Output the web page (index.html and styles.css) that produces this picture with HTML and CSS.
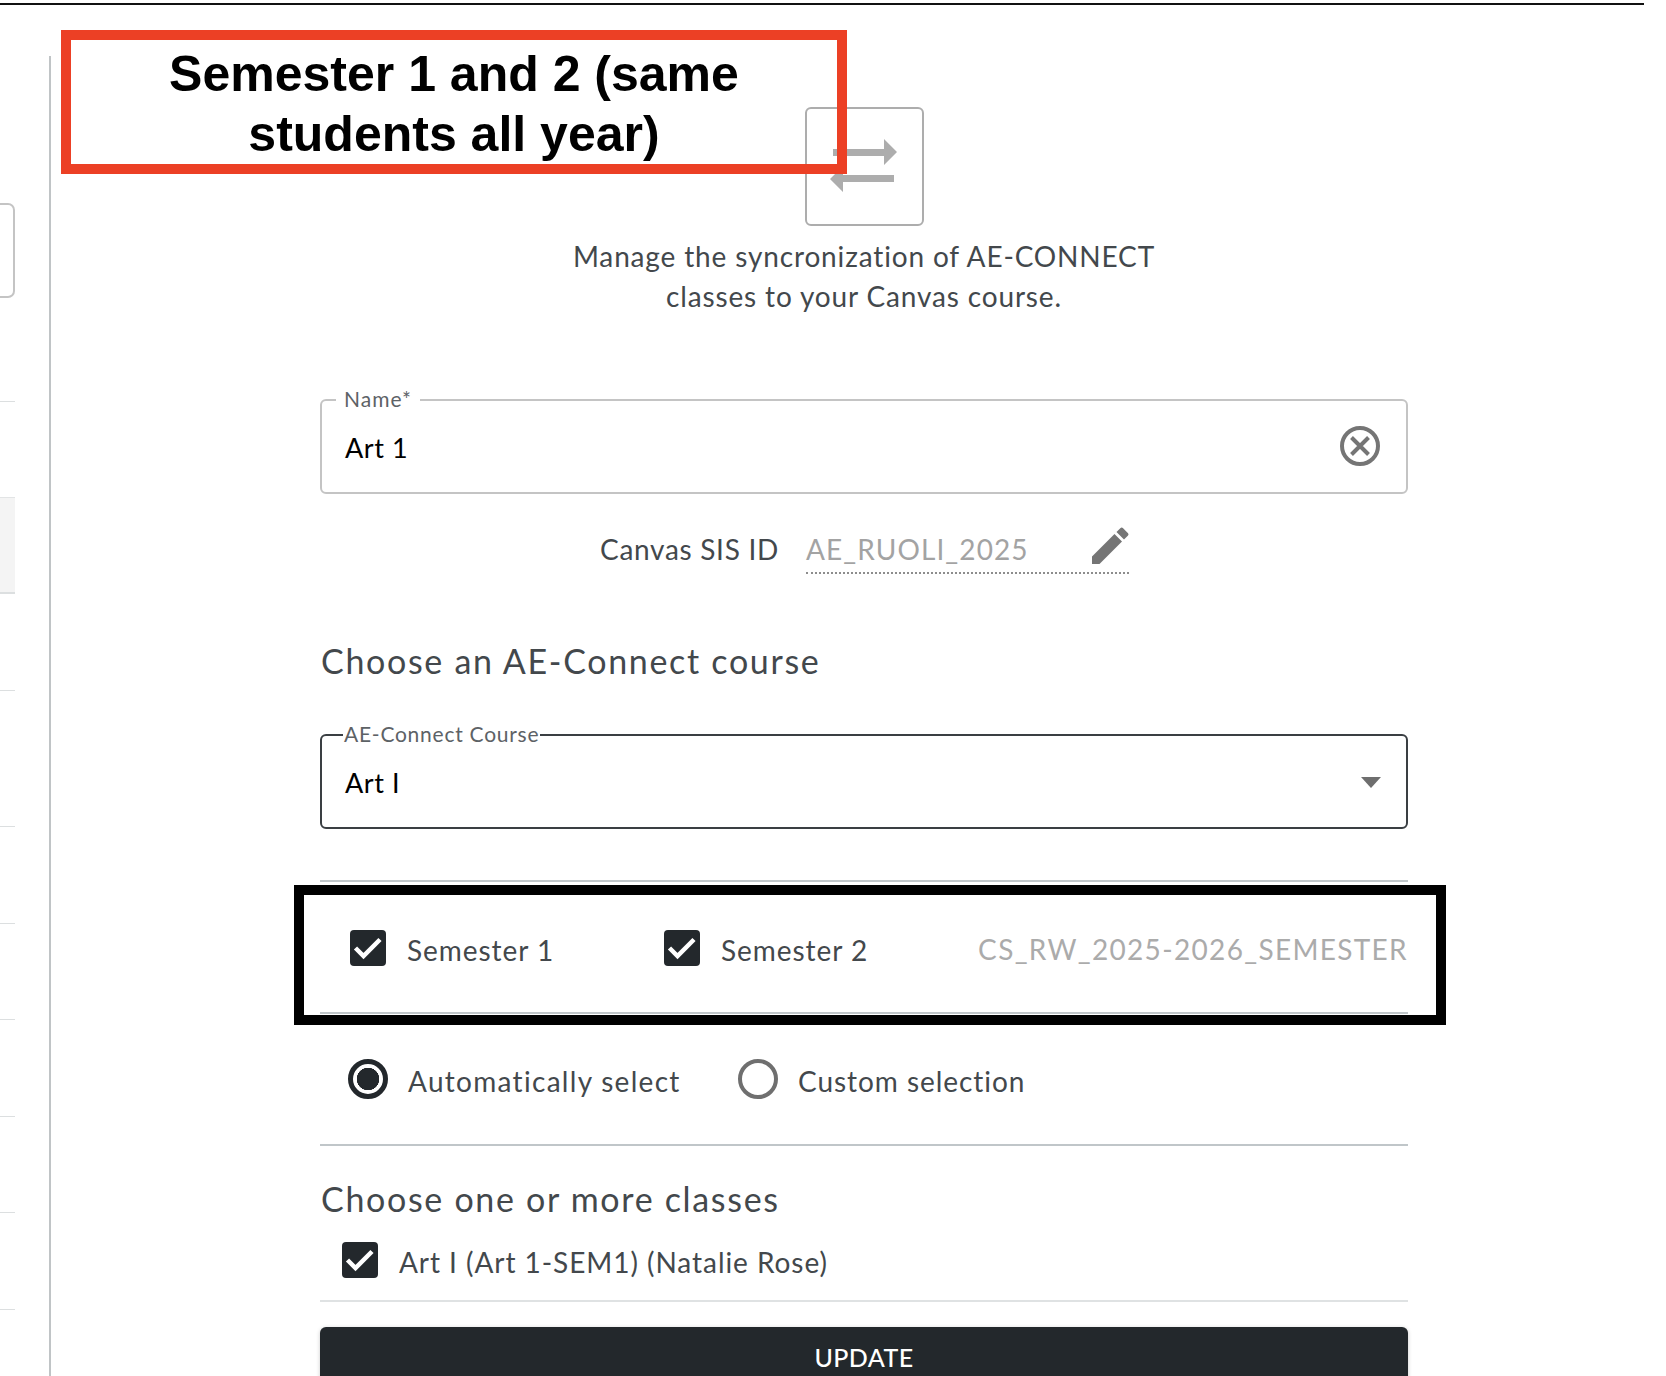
FILE: index.html
```html
<!DOCTYPE html>
<html lang="en">
<head>
<meta charset="utf-8">
<title>Manage syncronization</title>
<link rel="stylesheet" href="styles.css">
</head>
<body>
<div class="page">
  <div class="top-rule"></div>
  <div class="layout">
    <aside class="side">
      <div class="side-box"></div>
      <div class="side-row r1"></div>
      <div class="side-active"></div>
      <div class="side-row r2"></div>
      <div class="side-row r3"></div>
      <div class="side-row r4"></div>
      <div class="side-row r5"></div>
      <div class="side-row r4"></div>
      <div class="side-row r5"></div>
      <div class="side-row r4"></div>
    </aside>
    <div class="rail"></div>
    <main class="form">
      <div class="logo-box">
        <svg class="logo" viewBox="0 0 119 119" aria-hidden="true"><path d="M28 42h51V32l13 13-13 13V49H28z"/><path d="M89 68H38V59L25 72l13 13V75h51z"/></svg>
      </div>
      <p class="intro">Manage the syncronization of AE-CONNECT<br>classes to your Canvas course.</p>

      <div class="field name-field">
        <span class="field-label">Name*</span>
        <span class="field-value">Art 1</span>
        <svg class="clear" viewBox="0 0 40 40" aria-hidden="true"><circle cx="20" cy="20" r="18" /><path d="M11.500 11.500l17 17M28.500 11.500l-17 17"/></svg>
      </div>

      <div class="sis">
        <span class="sis-label">Canvas SIS ID</span>
        <div class="sis-input">
          <span>AE_RUOLI_2025</span>
          <svg class="pencil" viewBox="0 0 37 37" aria-hidden="true"><path d="M0 29.500 22.500 7l7.500 7.500L7.500 37H0zM24.500 5l3.800-3.800a2 2 0 0 1 2.800 0l4.700 4.700a2 2 0 0 1 0 2.800L32 12.500z"/></svg>
        </div>
      </div>

      <h2 class="heading course-heading">Choose an AE-Connect course</h2>

      <div class="field select-field">
        <span class="field-label">AE-Connect Course</span>
        <span class="field-value">Art I</span>
        <span class="caret"></span>
      </div>

      <hr class="divider d1">
      <div class="terms">
        <label class="opt term-1"><svg class="check" viewBox="0 0 36 36" aria-hidden="true"><rect width="36" height="36" rx="4"/><path d="M5.500 18l8 8L30 9.500"/></svg><span class="opt-text">Semester 1</span></label>
        <label class="opt term-2"><svg class="check" viewBox="0 0 36 36" aria-hidden="true"><rect width="36" height="36" rx="4"/><path d="M5.500 18l8 8L30 9.500"/></svg><span class="opt-text">Semester 2</span></label>
        <span class="term-code">CS_RW_2025-2026_SEMESTER</span>
      </div>
      <hr class="divider d2">

      <div class="radios">
        <label class="opt radio-auto"><span class="radio on"></span><span class="opt-text">Automatically select</span></label>
        <label class="opt radio-custom"><span class="radio"></span><span class="opt-text">Custom selection</span></label>
      </div>
      <hr class="divider d3">

      <h2 class="heading classes-heading">Choose one or more classes</h2>
      <label class="opt class-opt"><svg class="check" viewBox="0 0 36 36" aria-hidden="true"><rect width="36" height="36" rx="4"/><path d="M5.500 18l8 8L30 9.500"/></svg><span class="opt-text">Art I (Art 1-SEM1) (Natalie Rose)</span></label>
      <hr class="divider d4">
      <button class="update" type="button">UPDATE</button>
    </main>
  </div>

  <div class="note-red">Semester 1 and 2 (same<br>students all year)</div>
  <div class="note-black"></div>
</div>
</body>
</html>
```

FILE: styles.css
```css
* { box-sizing: border-box; }
html, body { margin: 0; padding: 0; background: #fff; }
.page {
  position: relative;
  width: 1666px;
  height: 1376px;
  overflow: hidden;
  font-family: Lato, "Noto Sans", sans-serif;
  color: #43484c;
  background: #fff;
}
.top-rule { width: 1644px; height: 2px; margin-top: 3px; background: #111; }
.layout { display: flex; align-items: flex-start; height: 1371px; }

.side { width: 15px; flex: none; padding-top: 198px; }
.side-box { height: 95px; border: 2px solid #c4c4c4; border-left: 0; border-radius: 0 7px 7px 0; }
.side-row { border-bottom: 1px solid #dcdfe0; }
.r1 { height: 104px; }
.side-active { height: 97px; margin-top: 95px; background: #f4f4f4; border-top: 1px solid #e2e4e5; border-bottom: 2px solid #dcdfe0; }
.r2 { height: 97px; }
.r3 { height: 136px; }
.r4 { height: 97px; }
.r5 { height: 96px; }

.rail { width: 2px; flex: none; height: 1320px; margin: 51px 0 0 34px; background: #c0c4c6; }

.form { width: 1088px; flex: none; margin-left: 269px; display: flex; flex-direction: column; }

.logo-box {
  width: 119px;
  height: 119px;
  margin: 102px auto 0;
  border: 2px solid #adadad;
  border-radius: 6px;
}
.logo { display: block; width: 119px; height: 119px; margin: -2px; fill: #adadad; }
.intro { margin: 10px 0 0; font-size: 28px; line-height: 40px; letter-spacing: 0.85px; text-align: center; }

.field {
  position: relative;
  height: 95px;
  border: 2px solid #c4c4c4;
  border-radius: 6px;
  display: flex;
  align-items: center;
}
.name-field { margin-top: 83px; }
.select-field { margin-top: 53px; border-color: #3a3f43; }
.field-label {
  position: absolute;
  left: 14px;
  top: -14px;
  padding: 0 8px;
  background: #fff;
  font-size: 21px;
  line-height: 24px;
  letter-spacing: 0.75px;
  color: #5d6266;
}
.name-field .field-label { letter-spacing: 1px; }
.select-field .field-label { padding: 0 1px; left: 21px; }
.field-value { margin: 1px 0 0 23px; font-size: 27px; color: #000; letter-spacing: 0.6px; }
.clear { position: absolute; right: 26px; top: 25px; width: 40px; height: 40px; fill: none; stroke: #757575; stroke-width: 4; }
.caret {
  position: absolute;
  right: 25px;
  top: 41px;
  border-style: solid;
  border-width: 11px 10px 0;
  border-color: #6e6e6e transparent transparent;
}

.sis { display: flex; align-items: flex-start; margin: 33px 0 0 280px; }
.sis-label { font-size: 28px; line-height: 44px; letter-spacing: 0.7px; margin-right: 27px; }
.sis-input {
  width: 323px;
  height: 47px;
  display: flex;
  justify-content: space-between;
  border-bottom: 2px dotted #8d8d8d;
  color: #a3a3a3;
  font-size: 28px;
  line-height: 44px;
  letter-spacing: 1.1px;
}
.pencil { width: 37px; height: 37px; fill: #757575; flex: none; }

.heading { margin: 0 0 0 1px; font-size: 34px; font-weight: 400; line-height: 40px; letter-spacing: 1.68px; }
.course-heading { margin-top: 67px; }

.divider { width: 100%; height: 2px; margin: 0; border: 0; background: #c0c6c9; }
.d1 { margin-top: 51px; }
.d2 { margin-top: 46px; }
.d3 { margin-top: 45px; }
.d4 { margin-top: 22px; background: #dfe2e3; }

.opt { display: flex; align-items: center; font-size: 28px; line-height: 36px; letter-spacing: 0.95px; }
.opt-text { padding-top: 3px; }
.check { width: 36px; height: 36px; flex: none; margin-right: 21px; }
.check rect { fill: #23282c; }
.check path { fill: none; stroke: #fff; stroke-width: 4.500; }

.terms { display: flex; align-items: center; height: 36px; margin-top: 48px; padding-left: 30px; }
.term-1 { width: 314px; }
.term-code { margin-left: auto; padding-top: 2px; color: #ababab; letter-spacing: 1.33px; font-size: 28px; }

.radios { display: flex; align-items: center; height: 40px; margin-top: 45px; padding-left: 28px; }
.radio-auto { width: 390px; letter-spacing: 1.3px; }
.radio { width: 40px; height: 40px; flex: none; margin-right: 20px; border: 4px solid #6f6f6f; border-radius: 50%; }
.radio.on { border: 5px solid #23282c; background: radial-gradient(circle, #23282c 0 11px, #fff 11.500px); }

.classes-heading { margin-top: 33px; }
.class-opt { height: 36px; margin: 23px 0 0 22px; }

.update {
  height: 80px;
  margin-top: 25px;
  border: 0;
  border-radius: 6px;
  background: #23282c;
  box-shadow: 0 1px 4px rgba(0, 0, 0, 0.2);
  color: #fff;
  font-family: Lato, "Noto Sans", sans-serif;
  font-size: 25px;
  font-weight: 500;
  letter-spacing: 0.4px;
  padding: 0 0 20px;
}

.note-red {
  position: absolute;
  left: 61px;
  top: 30px;
  width: 786px;
  height: 144px;
  padding-top: 4px;
  border: 10px solid #ec4025;
  font-family: "Liberation Sans", Arial, sans-serif;
  font-size: 50px;
  font-weight: 700;
  line-height: 60px;
  text-align: center;
  color: #000;
}
.note-black {
  position: absolute;
  left: 294px;
  top: 885px;
  width: 1152px;
  height: 140px;
  border: 10px solid #000;
}
```
